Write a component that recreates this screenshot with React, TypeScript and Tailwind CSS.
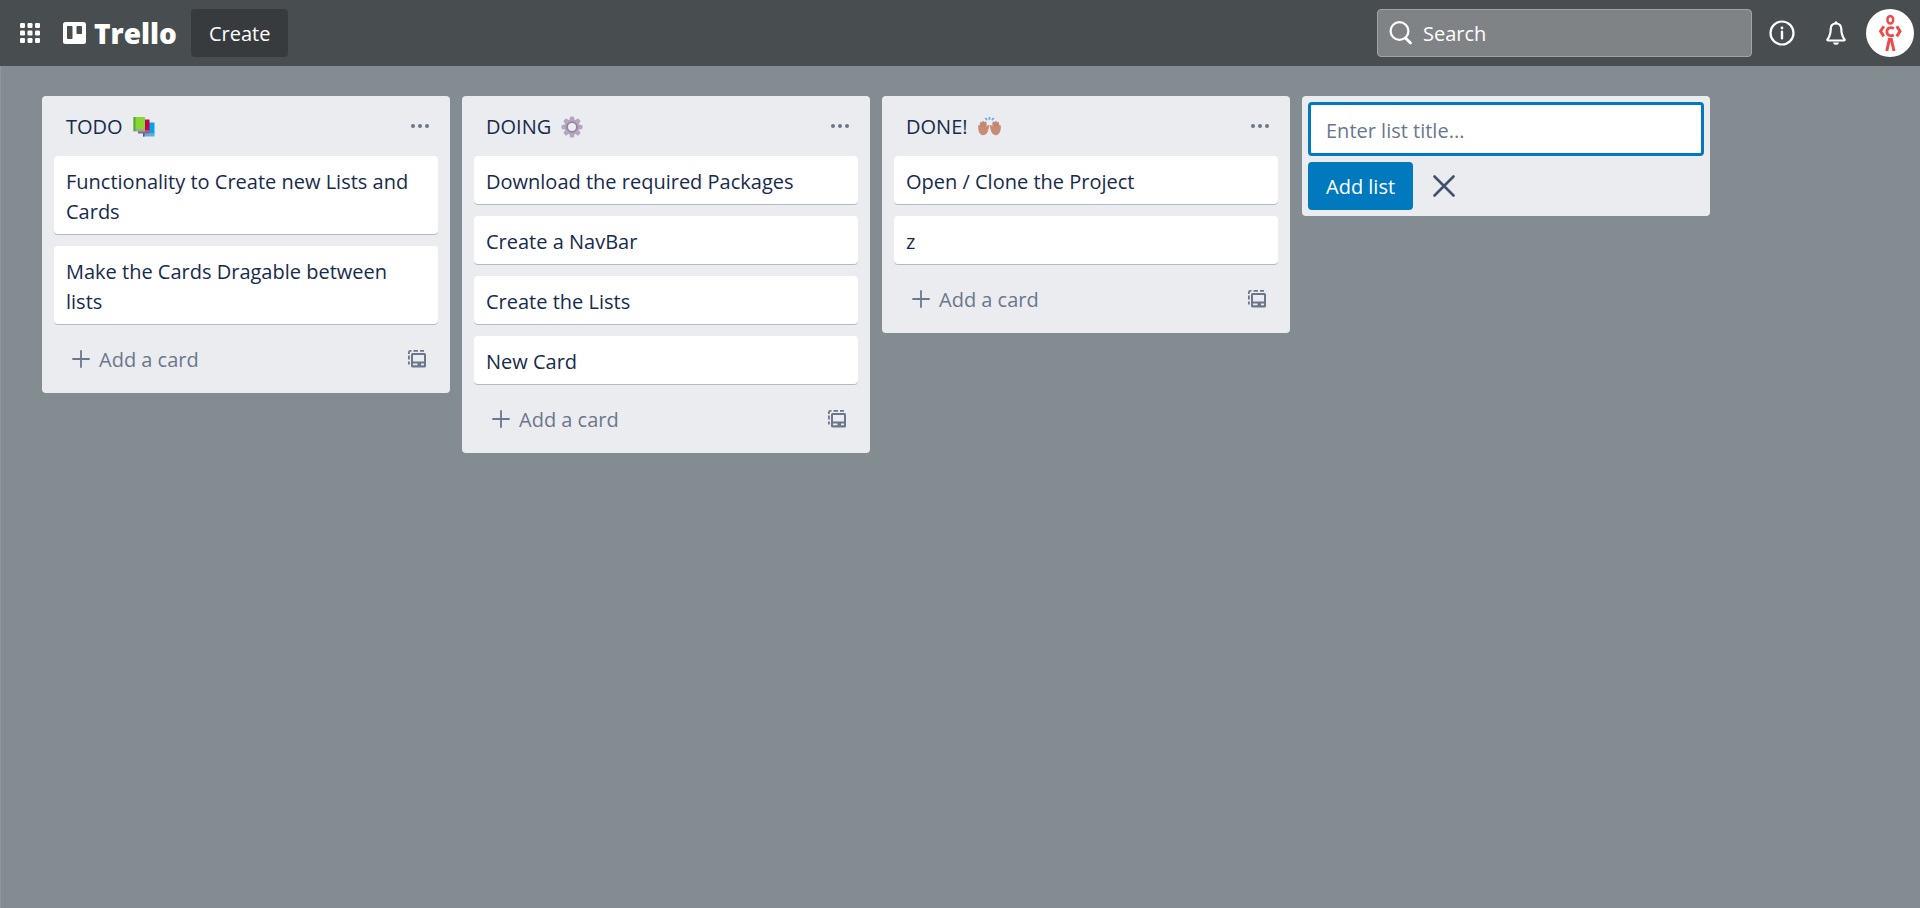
import type { ReactNode } from "react";

type List = { title: string; emoji: ReactNode; cards: string[] };

function GridIcon() {
  return (
    <svg width="20" height="20" viewBox="0 0 20 20" fill="currentColor" aria-hidden="true">
      {[0, 7.5, 15].map((y) =>
        [0, 7.5, 15].map((x) => <rect key={`${x}-${y}`} x={x} y={y} width="5" height="5" rx="1.2" />),
      )}
    </svg>
  );
}

function BoardIcon() {
  return (
    <svg width="23" height="22" viewBox="0 0 23 22" fill="currentColor" aria-hidden="true">
      <path
        fillRule="evenodd"
        d="M2.5 0h18A2.5 2.5 0 0 1 23 2.5v17a2.5 2.5 0 0 1-2.5 2.5h-18A2.5 2.5 0 0 1 0 19.5v-17A2.5 2.5 0 0 1 2.5 0ZM4.8 4a.8.8 0 0 0-.8.8v11.4a.8.8 0 0 0 .8.8h3.900a.8.8 0 0 0 .8-.8V4.800a.8.8 0 0 0-.8-.8ZM14.300 4a.8.8 0 0 0-.8.8v6.400a.8.8 0 0 0 .8.8h3.900a.8.8 0 0 0 .8-.8V4.800a.8.8 0 0 0-.8-.8Z"
      />
    </svg>
  );
}

function SearchIcon() {
  return (
    <svg width="24" height="24" viewBox="0 0 24 24" fill="none" stroke="currentColor" strokeWidth="2.2" aria-hidden="true">
      <circle cx="10.5" cy="10" r="8.9" />
      <path d="M16.5 17 21.5 22" strokeWidth="2.8" strokeLinecap="round" />
    </svg>
  );
}

function InfoIcon() {
  return (
    <svg width="26" height="26" viewBox="0 0 26 26" fill="none" stroke="currentColor" aria-hidden="true">
      <circle cx="13" cy="13" r="11.5" strokeWidth="2.2" />
      <path d="M13 11.8v6.400" strokeWidth="2.4" strokeLinecap="round" />
      <circle cx="13" cy="8" r="1.4" fill="currentColor" stroke="none" />
    </svg>
  );
}

function BellIcon() {
  return (
    <svg width="20" height="24" viewBox="0 0 20 24" fill="currentColor" aria-hidden="true">
      <path
        d="M10 2.500c-3.400 0-5.300 2.400-5.300 5.600 0 4.600-.8 7.200-3.200 10.300-.3.500-.1 1.100.5 1.100h16c.6 0 .8-.6.5-1.100-2.400-3.100-3.200-5.700-3.200-10.300C15.300 4.900 13.400 2.500 10 2.500Z"
        fill="none"
        stroke="currentColor"
        strokeWidth="2.2"
      />
      <circle cx="10" cy="1.8" r="1.5" />
      <path d="M7 21.500h6c-.4 1.500-1.500 2.300-3 2.300s-2.600-.8-3-2.300Z" />
    </svg>
  );
}

function AvatarFigure() {
  return (
    <svg width="48" height="48" viewBox="0 0 48 48" fill="none" stroke="#ec4b4b" strokeWidth="2.5" aria-hidden="true">
      <ellipse cx="24.300" cy="10.800" rx="2.900" ry="3.800" />
      <path d="M27.800 19.400c-3.700-1.700-6.900-.2-6.900 3.300s3.200 5 6.900 3.300" strokeWidth="2.8" />
      <path d="M17.800 17.200 14.600 22.200l3.200 5.200M30.800 17.200l3.200 5-3.200 5.200" strokeWidth="3" />
      <path d="M23.600 29 20.800 42M25 29 28 42" strokeWidth="3" />
    </svg>
  );
}

function DotsIcon() {
  return (
    <svg width="18" height="4" viewBox="0 0 18 4" fill="currentColor" aria-hidden="true">
      <circle cx="2" cy="2" r="2" />
      <circle cx="9" cy="2" r="2" />
      <circle cx="16" cy="2" r="2" />
    </svg>
  );
}

function PlusIcon() {
  return (
    <svg width="18" height="18" viewBox="0 0 18 18" fill="none" stroke="currentColor" strokeWidth="1.8" strokeLinecap="round" aria-hidden="true">
      <path d="M9 1v16M1 9h16" />
    </svg>
  );
}

function CloseIcon() {
  return (
    <svg width="22" height="22" viewBox="0 0 22 22" fill="none" stroke="currentColor" strokeWidth="2.6" strokeLinecap="round" aria-hidden="true">
      <path d="M1.500 1.500 20.500 20.500M20.500 1.500 1.500 20.500" />
    </svg>
  );
}

function TemplateIcon() {
  return (
    <svg width="18" height="18" viewBox="0 0 18 18" fill="currentColor" aria-hidden="true">
      <path
        fillRule="evenodd"
        d="M4.500 3h12A1.500 1.500 0 0 1 18 4.500v11.500A1.500 1.500 0 0 1 16.500 17.500h-12A1.500 1.500 0 0 1 3 16V4.500A1.500 1.500 0 0 1 4.500 3ZM5 5v6.500h11V5ZM5 13.600v1.700h4.500v-1.700ZM13 13.600v1.700h3v-1.700Z"
      />
      <path d="M.9 4V2.300A1.500 1.500 0 0 1 2.400.9H3.500M5.500.9h4.500M12 .9H16M.9 5.500v4M.9 11.500V14.500" fill="none" stroke="currentColor" strokeWidth="1.8" />
    </svg>
  );
}

function BooksEmoji() {
  return (
    <svg width="22" height="22" viewBox="0 0 22 22" role="img" aria-label="books">
      <path d="M10 6.500h11.500v11.500H10Z" fill="#00a3ee" />
      <path d="M10 17h11.500v3.500H10Z" fill="#67a9d6" />
      <path d="M10 6.500h1.500v14H10Z" fill="#0078b8" />
      <path d="M5 3.500h11.500v11H5Z" fill="#c30052" />
      <path d="M5 14h11.500v3.500H5Z" fill="#a8587c" />
      <path d="M.5 1H12v12H.5Z" fill="#86d72f" />
      <path d="M.5 13H12v2.500H.5Z" fill="#8fae9c" />
      <path d="M.5 1h2V15h-2Z" fill="#57a639" />
    </svg>
  );
}

function GearEmoji() {
  return (
    <svg width="22" height="22" viewBox="0 0 22 22" role="img" aria-label="gear">
      <g fill="#b4a7bd">
        {[0, 45, 90, 135].map((a) => (
          <rect key={a} x="8.7" y="0.5" width="4.6" height="21" rx="1.5" transform={`rotate(${a} 11 11)`} />
        ))}
        <circle cx="11" cy="11" r="7.800" />
      </g>
      <circle cx="11" cy="11" r="4.900" fill="#ebecf0" stroke="#9583a3" strokeWidth="1.8" />
    </svg>
  );
}

function HandsEmoji() {
  const hand =
    "M2.800 17.500C1 15.500.2 12.800.5 9.300.6 8 1.500 7.800 1.900 8.700c0-2.300.4-3.700 1.300-3.700.6 0 .8.5.9 1 .1-1.200.6-1.700 1.200-1.700.8 0 1 .7 1.100 1.400.2-.7.6-1 1.200-.9.900.1 1 1.300 1 2.600l.1 2.600c.4-1.200 1.100-2 1.900-1.700.9.400.4 1.600.1 2.700-.6 2.600-1 4.700-2.600 6.300-1.400 1.400-4 1.400-5.300.2Z";
  return (
    <svg width="23" height="22" viewBox="0 0 23 22" role="img" aria-label="raising hands">
      <g fill="#c88b76">
        <path d={hand} transform="matrix(1.04 0 0 1 -.3 .8)" />
        <path d={hand} transform="matrix(-1.04 0 0 1 23.300 .8)" />
      </g>
      <path d="M4 7v4M6.300 7v4M19 7v4M16.700 7v4" stroke="#b07460" strokeWidth=".5" />
      <path d="M7.300 2 9 4M11.500 1v2.800M15.700 2 14 4" stroke="#55acee" strokeWidth="1.7" />
    </svg>
  );
}

const lists: List[] = [
  {
    title: "TODO",
    emoji: <BooksEmoji />,
    cards: ["Functionality to Create new Lists and Cards", "Make the Cards Dragable between lists"],
  },
  {
    title: "DOING",
    emoji: <GearEmoji />,
    cards: ["Download the required Packages", "Create a NavBar", "Create the Lists", "New Card"],
  },
  { title: "DONE!", emoji: <HandsEmoji />, cards: ["Open / Clone the Project", "z"] },
];

function Header() {
  return (
    <header className="flex h-[66px] items-center justify-between bg-[#484d50] pr-[6px] pl-5 text-white">
      <div className="flex items-center">
        <button type="button" aria-label="Apps">
          <GridIcon />
        </button>
        <a href="#" className="ml-[23px] flex items-center gap-2 text-[28px] leading-[36px] font-extrabold">
          <BoardIcon />
          Trello
        </a>
        <button type="button" className="ml-[14px] h-12 rounded-[4px] bg-[#383b3d] px-[18px] pt-[2px] font-medium">
          Create
        </button>
      </div>
      <div className="flex items-center">
        <label className="flex h-12 w-[375px] items-center gap-[10px] rounded-[4px] border border-[#a1a4a6] bg-[#808385] px-[11px]">
          <SearchIcon />
          <input type="search" aria-label="Search" placeholder="Search" className="min-w-0 flex-1 pt-[2px] outline-none placeholder:text-white" />
        </label>
        <button type="button" aria-label="Information" className="ml-[17px]">
          <InfoIcon />
        </button>
        <button type="button" aria-label="Notifications" className="ml-[31px]">
          <BellIcon />
        </button>
        <button type="button" aria-label="Account" className="ml-5 rounded-full bg-white">
          <AvatarFigure />
        </button>
      </div>
    </header>
  );
}

function ListColumn({ title, emoji, cards }: List) {
  return (
    <section className="w-[408px] shrink-0 rounded-[4px] bg-[#ebecf0] px-3">
      <div className="flex h-[60px] items-center justify-between px-3">
        <h2 className="flex items-center gap-[10px] pt-[2px] font-medium">
          {title}
          {emoji}
        </h2>
        <button type="button" aria-label={`${title} actions`} className="-mr-[3px] text-[#6b778c]">
          <DotsIcon />
        </button>
      </div>
      <ul className="flex flex-col gap-3">
        {cards.map((card) => (
          <li key={card} className="rounded-[4px] bg-white px-3 pt-[11px] pb-[7px] shadow-[0_1px_0_#b3bac5]">
            {card}
          </li>
        ))}
      </ul>
      <div className="flex h-[69px] items-center justify-between px-3 text-[#6b778c]">
        <button type="button" className="flex items-center gap-[9px] pl-[6px]">
          <PlusIcon />
          <span className="pt-[3px]">Add a card</span>
        </button>
        <button type="button" aria-label="Create from template">
          <TemplateIcon />
        </button>
      </div>
    </section>
  );
}

function NewListForm() {
  return (
    <form className="flex w-[408px] shrink-0 flex-col gap-[6px] rounded-[4px] bg-[#ebecf0] p-[6px]">
      <input
        type="text"
        aria-label="List title"
        placeholder="Enter list title..."
        className="h-[54px] rounded-[4px] border-3 border-[#0079bf] bg-white px-[15px] pt-[2px] outline-none placeholder:text-[#6b778c]"
      />
      <div className="flex items-center gap-5">
        <button type="button" className="h-12 rounded-[4px] bg-[#0079bf] px-[18px] pt-[2px] font-medium text-white">
          Add list
        </button>
        <button type="button" aria-label="Cancel" className="text-[#42526e]">
          <CloseIcon />
        </button>
      </div>
    </form>
  );
}

export default function App() {
  return (
    <div className="flex min-h-screen flex-col bg-[#838c91] font-['Open_Sans',sans-serif] text-[20px] leading-[30px] text-[#172b4d]">
      <Header />
      <main className="flex flex-1 items-start gap-3 border-l border-[#8d969b] pt-[30px] pr-[42px] pl-[41px]">
        {lists.map((list) => (
          <ListColumn key={list.title} {...list} />
        ))}
        <NewListForm />
      </main>
    </div>
  );
}
